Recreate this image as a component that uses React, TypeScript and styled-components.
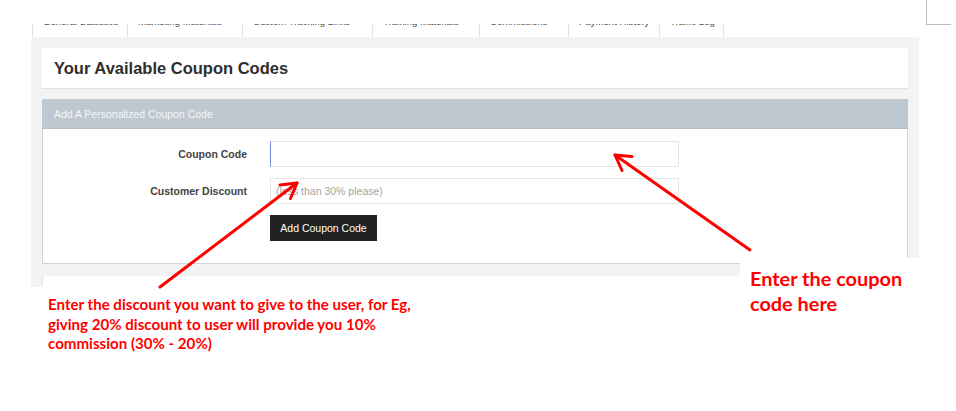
import React from 'react'
import styled, { createGlobalStyle } from 'styled-components'

const GlobalStyle = createGlobalStyle`
  html, body {
    margin: 0;
    padding: 0;
    background: #fff;
  }
  body {
    font-family: "Liberation Sans", Arial, sans-serif;
  }
`

const Page = styled.div`
  position: relative;
  width: 956px;
  height: 411px;
  overflow: hidden;
  background: #fff;
`

const CornerMark = styled.div`
  position: absolute;
  top: 0;
  left: 926px;
  width: 24px;
  height: 24px;
  border-left: 1px solid #bdbdbd;
  border-bottom: 1px solid #bdbdbd;
`

const Shot = styled.div`
  margin-left: 31px;
  width: 888px;
  height: 263px;
  padding-top: 24px;
  overflow: hidden;
`

const Tabs = styled.div`
  display: flex;
  height: 13px;
  margin-left: 1px;
`

const Tab = styled.div<{ $w: number }>`
  width: ${p => p.$w}px;
  height: 13px;
  box-sizing: border-box;
  padding-left: 10px;
  overflow: hidden;
  background: #fff;
  border-left: 1px solid #e4e4e4;
  &:last-child {
    border-right: 1px solid #e4e4e4;
  }
  span {
    display: block;
    margin-top: -8px;
    font-size: 9.6px;
    line-height: 11px;
    color: #4a4a4a;
    white-space: nowrap;
  }
`

const Well = styled.div`
  background: #f3f3f3;
  padding: 11px 11px 0;
  height: 300px;
`

const TitleCard = styled.div`
  display: flex;
  align-items: center;
  height: 40px;
  padding-left: 12px;
  background: #fff;
  border-bottom: 1px solid #e2e2e2;
  margin-bottom: 10px;
`

const Title = styled.h2`
  margin: 0;
  font-size: 16.5px;
  font-weight: bold;
  color: #2e2e2e;
`

const Panel = styled.div`
  background: #fff;
  margin-bottom: 12px;
`

const PanelHeading = styled.div`
  display: flex;
  align-items: center;
  height: 29px;
  padding-left: 12px;
  background: #bec8d0;
  border-bottom: 1px solid #b4bec7;
  color: #f4f6f8;
  font-size: 10.5px;
`

const PanelBody = styled.div`
  border: 1px solid #cdd5dc;
  border-top: none;
  padding: 12px 0 22px;
`

const Form = styled.div`
  display: grid;
  grid-template-columns: 204px 409px;
  column-gap: 23px;
  row-gap: 11px;
  align-items: center;
`

const Label = styled.label`
  text-align: right;
  font-size: 10.5px;
  font-weight: bold;
  color: #444;
`

const Input = styled.input<{ $focused?: boolean }>`
  box-sizing: border-box;
  width: 100%;
  height: 26px;
  padding: 0 5px;
  border: 1px solid #e6e6e6;
  border-left-color: ${p => (p.$focused ? '#6f8fd8' : '#e6e6e6')};
  outline: none;
  font-family: "Liberation Sans", Arial, sans-serif;
  font-size: 10.5px;
  color: #333;
  &::placeholder {
    color: #a3a3a3;
  }
`

const Button = styled.button`
  grid-column: 2;
  justify-self: start;
  height: 26px;
  width: 107px;
  padding: 0;
  border: none;
  background: #222;
  color: #fff;
  font-family: "Liberation Sans", Arial, sans-serif;
  font-size: 10.5px;
`

const NextCard = styled.div`
  height: 60px;
  background: #fff;
  border-left: 1px solid #e6e6e6;
`

const NoteLeft = styled.p`
  margin: 0;
  padding: 8px 0 0 48px;
  font-family: Lato, "Open Sans", sans-serif;
  font-weight: bold;
  font-size: 15.1px;
  line-height: 19.5px;
  color: #f00;
`

const NoteRight = styled.div`
  position: absolute;
  left: 740px;
  top: 258px;
  width: 206px;
  height: 60px;
  padding: 8px 0 0 10px;
  background: #fff;
  font-family: Lato, "Open Sans", sans-serif;
  font-weight: bold;
  font-size: 19.9px;
  line-height: 25px;
  color: #f00;
`

const Arrows = styled.svg`
  position: absolute;
  left: 0;
  top: 0;
  pointer-events: none;
`

const tabs: [string, number][] = [
  ['General Statistics', 95],
  ['Marketing Materials', 115],
  ['Custom Tracking Links', 130],
  ['Training Materials', 107],
  ['Commissions', 89],
  ['Payment History', 91],
  ['Traffic Log', 65],
]

export default function App() {
  return (
    <Page>
      <GlobalStyle />
      <CornerMark />
      <Shot>
        <Tabs>
          {tabs.map(([t, w]) => (
            <Tab key={t} $w={w}>
              <span>{t}</span>
            </Tab>
          ))}
        </Tabs>
        <Well>
          <TitleCard>
            <Title>Your Available Coupon Codes</Title>
          </TitleCard>
          <Panel>
            <PanelHeading>Add A Personalized Coupon Code</PanelHeading>
            <PanelBody>
              <Form>
                <Label>Coupon Code</Label>
                <Input $focused />
                <Label>Customer Discount</Label>
                <Input placeholder="(less than 30% please)" />
                <Button>Add Coupon Code</Button>
              </Form>
            </PanelBody>
          </Panel>
          <NextCard />
        </Well>
      </Shot>
      <NoteLeft>
        Enter the discount you want to give to the user, for Eg,
        <br />
        giving 20% discount to user will provide you 10%
        <br />
        commission (30% - 20%)
      </NoteLeft>
      <NoteRight>
        Enter the coupon
        <br />
        code here
      </NoteRight>
      <Arrows width="956" height="411" viewBox="0 0 956 411">
        <g stroke="#f00" strokeWidth="3" fill="none" strokeLinecap="round" strokeLinejoin="round">
          <line x1="160" y1="287" x2="297" y2="183" />
          <polyline points="280,185 297,183 290.5,198.5" />
          <line x1="750" y1="250" x2="615" y2="155" />
          <polyline points="632,156.5 615,155 622,170.5" />
        </g>
      </Arrows>
    </Page>
  )
}
